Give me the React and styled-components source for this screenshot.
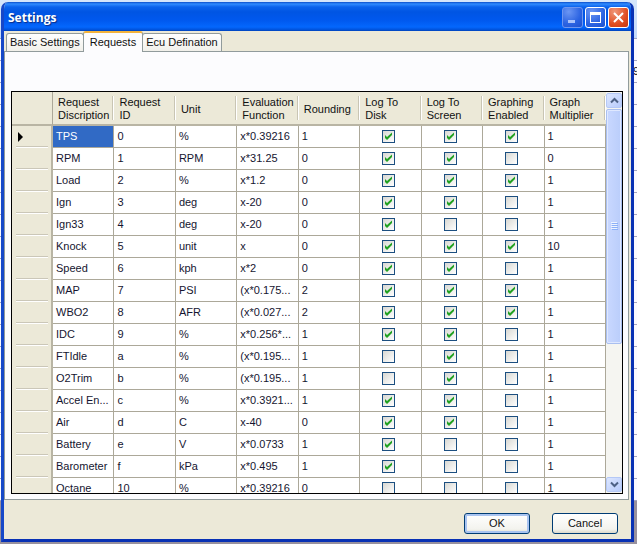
import React from "react";
import styled, { createGlobalStyle } from "styled-components";

const Global = createGlobalStyle`
  *, *::before, *::after { box-sizing: border-box; }
  body { margin: 0; font: 11px/13px "Liberation Sans", Arial, sans-serif; color: #111; }
  button, input { font: inherit; color: inherit; margin: 0; }
`;

const Desktop = styled.div`
  position: relative;
  height: 100vh;
  min-height: 300px;
  padding: 2px 3px 2px 1px;
  overflow: hidden;
  background:
    linear-gradient(#98919e, #98919e) left bottom / 100% 43px no-repeat,
    linear-gradient(#d5e6fb, #c3d9fa) left top / 100% 38px no-repeat,
    repeating-linear-gradient(#fbfaff 0 21px, #a5a4c0 21px 22px) 0 17px;
`;

const BackgroundValue = styled.span`
  position: absolute;
  left: calc(100% - 4px);
  top: 65px;
`;

const Window = styled.main`
  position: relative;
  height: 100%;
  display: flex;
  flex-direction: column;
  background: #ece9d8;
  border: solid #0831b4;
  border-width: 0 3px 3px;
  border-left-color: #1648c8;
  border-radius: 7px 7px 0 0;
  overflow: hidden;
`;

const TitleBar = styled.header`
  height: 29px;
  margin: 0 -3px;
  padding: 2px 5px 0 7px;
  flex: none;
  display: flex;
  align-items: center;
  gap: 2px;
  background: linear-gradient(#0a4ecb 0, #2f8bff 2px, #0a62ec 5px, #0055e3 10px, #0058ee 18px, #0467fd 25px, #0050d8 28px, #0041b5 29px);
`;

const Title = styled.h1`
  flex: 1;
  margin: 0;
  font: bold 12px/16px "Open Sans", "Noto Sans", sans-serif;
  color: #fff;
  text-shadow: 1px 1px 1px #0b2d85;
`;

const CaptionButton = styled.button`
  width: 21px;
  height: 21px;
  padding: 0;
  display: grid;
  place-items: center;
  border: 1px solid ${(p) => (p.$tone === "dim" ? "#6f96ee" : "#fff")};
  border-radius: 3px;
  background: ${(p) =>
    p.$tone === "close"
      ? "radial-gradient(circle at 30% 20%, #f0977a, #e04e22 60%, #c5370f)"
      : "radial-gradient(circle at 30% 20%, #6b96f3, #2b63e2 60%, #1c50cf)"};
`;

const TabStrip = styled.div`
  display: flex;
  align-items: flex-end;
  height: 20px;
  flex: none;
  padding-left: 2px;
`;

const Tab = styled.button`
  position: relative;
  height: ${(p) => (p.$active ? 21 : 18)}px;
  margin-bottom: ${(p) => (p.$active ? -1 : 0)}px;
  z-index: ${(p) => (p.$active ? 1 : 0)};
  padding: 0 ${(p) => (p.$active ? 6 : 3)}px;
  white-space: nowrap;
  border: 1px solid #919b9c;
  border-bottom: 0;
  border-top: ${(p) => (p.$active ? "2px solid #f3b33d" : "1px solid #919b9c")};
  border-radius: 3px 3px 0 0;
  background: ${(p) => (p.$active ? "#fcfcfe" : "linear-gradient(#fff, #f1f0ea)")};
  & + & { margin-left: -1px; }
`;

const Panel = styled.section`
  flex: 1;
  min-height: 0;
  margin-right: 2px;
  padding: 39px 5px 5px 6px;
  display: flex;
  border: 1px solid #919b9c;
  background: #fcfcfe;
`;

const Grid = styled.div`
  flex: 1;
  min-width: 0;
  display: flex;
  overflow: hidden;
  border: 1px solid #000;
`;

const TableArea = styled.div`
  flex: 1;
  min-width: 0;
  overflow: hidden;
  background: #fff;
`;

const Table = styled.table`
  width: 100%;
  table-layout: fixed;
  border-collapse: separate;
  border-spacing: 0;
`;

const StubHead = styled.th`
  width: 41px;
  background: #ece9d8;
  border-right: 1px solid #aca899;
  border-bottom: 2px solid #b9b5a4;
`;

const ColumnHead = styled.th`
  height: 34px;
  padding: 2px 3px 0 5px;
  text-align: left;
  font-weight: normal;
  border-bottom: 2px solid #b9b5a4;
  background:
    linear-gradient(90deg, #c9c5b4 1px, #fff 1px) right 4px / 2px 24px no-repeat,
    #ece9d8;
`;

const Stub = styled.th`
  padding: 0 0 0 6px;
  border-right: 2px solid #b9b5a4;
  background:
    linear-gradient(#cbc7b8 1px, #fff 1px) 4px bottom / 32px 2px no-repeat,
    #ece9d8;
`;

const Cell = styled.td`
  height: 22px;
  padding: ${(p) => (p.$check ? "0 3px 0 0" : "0 0 0 3px")};
  overflow: hidden;
  white-space: nowrap;
  border-right: 1px solid #aca899;
  border-bottom: 1px solid #aca899;
  color: ${(p) => (p.$selected ? "#fff" : "#151530")};
  background: ${(p) => (p.$selected ? "#316ac5" : "#fff")};
`;

const Check = styled.input`
  appearance: none;
  display: block;
  width: 13px;
  height: 13px;
  border: 1px solid #1c4f80;
  background: linear-gradient(135deg, #d8d8d3, #fff);
`;

const CheckBox = styled.label`
  display: grid;
  justify-content: center;
  & > * { grid-area: 1 / 1; }
  & > svg { margin: 1px; pointer-events: none; }
`;

const ScrollBar = styled.div`
  width: 16px;
  flex: none;
  display: flex;
  flex-direction: column;
  padding: 1px 0;
  gap: 1px;
  background: #f5f5f1;
`;

const ScrollButton = styled.button`
  height: 15px;
  flex: none;
  padding: 0;
  display: grid;
  place-items: center;
  border: 1px solid #b4c8f6;
  border-radius: 2px;
  background: linear-gradient(135deg, #dce6ff, #b7cbfb);
`;

const ScrollTrack = styled.div`
  flex: 1;
  min-height: 0;
`;

const Thumb = styled.div`
  height: 64%;
  display: grid;
  place-items: center;
  border: 1px solid #a9bff0;
  border-radius: 2px;
  box-shadow: inset 0 0 0 1px #dfe8ff;
  background: linear-gradient(90deg, #c9d8ff, #bacdfb);
`;

const Footer = styled.footer`
  flex: none;
  display: flex;
  justify-content: flex-end;
  gap: 22px;
  padding: 13px 13px 5px;
`;

const DialogButton = styled.button`
  width: 66px;
  height: 21px;
  padding: 0;
  border: 1px solid #003c74;
  border-radius: 3px;
  background: linear-gradient(#fff, #f3f3ee 80%, #dcd8cb);
  box-shadow: ${(p) => (p.$primary ? "inset 0 0 0 2px #a9c4f1" : "none")};
`;

const columns = [
  "Request Discription", "Request ID", "Unit", "Evaluation Function", "Rounding",
  "Log To Disk", "Log To Screen", "Graphing Enabled", "Graph Multiplier",
];

const rows = [
  ["TPS", "0", "%", "x*0.39216", "1", true, true, true, "1"],
  ["RPM", "1", "RPM", "x*31.25", "0", true, true, false, "0"],
  ["Load", "2", "%", "x*1.2", "0", true, true, true, "1"],
  ["Ign", "3", "deg", "x-20", "0", true, true, false, "1"],
  ["Ign33", "4", "deg", "x-20", "0", true, false, false, "1"],
  ["Knock", "5", "unit", "x", "0", true, true, true, "10"],
  ["Speed", "6", "kph", "x*2", "0", true, true, false, "1"],
  ["MAP", "7", "PSI", "(x*0.175...", "2", true, true, true, "1"],
  ["WBO2", "8", "AFR", "(x*0.027...", "2", true, true, true, "1"],
  ["IDC", "9", "%", "x*0.256*...", "1", true, true, false, "1"],
  ["FTIdle", "a", "%", "(x*0.195...", "1", false, true, false, "1"],
  ["O2Trim", "b", "%", "(x*0.195...", "1", false, true, false, "1"],
  ["Accel En...", "c", "%", "x*0.3921...", "1", true, true, false, "1"],
  ["Air", "d", "C", "x-40", "0", true, true, false, "1"],
  ["Battery", "e", "V", "x*0.0733", "1", true, false, false, "1"],
  ["Barometer", "f", "kPa", "x*0.495", "1", true, false, false, "1"],
  ["Octane", "10", "%", "x*0.39216", "0", false, false, false, "1"],
];

function CheckField({ label, initial }) {
  const [checked, setChecked] = React.useState(initial);
  return (
    <CheckBox>
      <Check
        type="checkbox"
        aria-label={label}
        checked={checked}
        onChange={(e) => setChecked(e.target.checked)}
      />
      {checked && (
        <svg width="11" height="11" aria-hidden="true">
          <path d="M2 4v3l2 2 5-5V1.500L4 6z" fill="#21a121" />
        </svg>
      )}
    </CheckBox>
  );
}

function Chevron({ down }) {
  return (
    <svg width="9" height="7" aria-hidden="true">
      <path d={down ? "M1 1.500l3.500 3.500L8 1.500" : "M1 5.500L4.500 2 8 5.500"} fill="none" stroke="#4d6185" strokeWidth="2" />
    </svg>
  );
}

export default function App() {
  return (
    <Desktop>
      <Global />
      <BackgroundValue>9</BackgroundValue>
      <Window>
        <TitleBar>
          <Title>Settings</Title>
          <CaptionButton $tone="dim" aria-label="Minimize">
            <svg width="13" height="13"><path d="M2 9h7v3H2z" fill="#a9c3fb" /></svg>
          </CaptionButton>
          <CaptionButton aria-label="Maximize">
            <svg width="13" height="13"><path d="M1 1h11v11H1zM2 4v7h9V4z" fill="#fff" fillRule="evenodd" /></svg>
          </CaptionButton>
          <CaptionButton $tone="close" aria-label="Close">
            <svg width="13" height="13"><path d="M2 2l9 9M11 2l-9 9" stroke="#fff" strokeWidth="2" /></svg>
          </CaptionButton>
        </TitleBar>
        <TabStrip role="tablist">
          <Tab role="tab" aria-selected="false">Basic Settings</Tab>
          <Tab role="tab" aria-selected="true" $active>Requests</Tab>
          <Tab role="tab" aria-selected="false">Ecu Defination</Tab>
        </TabStrip>
        <Panel>
          <Grid>
            <TableArea>
              <Table>
                <thead>
                  <tr>
                    <StubHead />
                    {columns.map((name) => <ColumnHead key={name} scope="col">{name}</ColumnHead>)}
                  </tr>
                </thead>
                <tbody>
                  {rows.map((row, r) => (
                    <tr key={row[0]}>
                      <Stub>
                        {r === 0 && (
                          <svg width="5" height="10" display="block" aria-hidden="true"><path d="M0 0l5 5-5 5z" /></svg>
                        )}
                      </Stub>
                      {row.map((value, c) => (
                        <Cell
                          key={columns[c]}
                          $selected={r === 0 && c === 0}
                          $check={typeof value === "boolean"}
                        >
                          {typeof value === "boolean"
                            ? <CheckField label={`${row[0]} ${columns[c]}`} initial={value} />
                            : value}
                        </Cell>
                      ))}
                    </tr>
                  ))}
                </tbody>
              </Table>
            </TableArea>
            <ScrollBar>
              <ScrollButton aria-label="Scroll up"><Chevron /></ScrollButton>
              <ScrollTrack>
                <Thumb>
                  <svg width="7" height="8" aria-hidden="true">
                    <path d="M0 0h6v1H0zM0 2h6v1H0zM0 4h6v1H0zM0 6h6v1H0z" fill="#eef4fe" />
                    <path d="M1 1h6v1H1zM1 3h6v1H1zM1 5h6v1H1zM1 7h6v1H1z" fill="#8cb0f8" />
                  </svg>
                </Thumb>
              </ScrollTrack>
              <ScrollButton aria-label="Scroll down"><Chevron down /></ScrollButton>
            </ScrollBar>
          </Grid>
        </Panel>
        <Footer>
          <DialogButton $primary>OK</DialogButton>
          <DialogButton>Cancel</DialogButton>
        </Footer>
      </Window>
    </Desktop>
  );
}
